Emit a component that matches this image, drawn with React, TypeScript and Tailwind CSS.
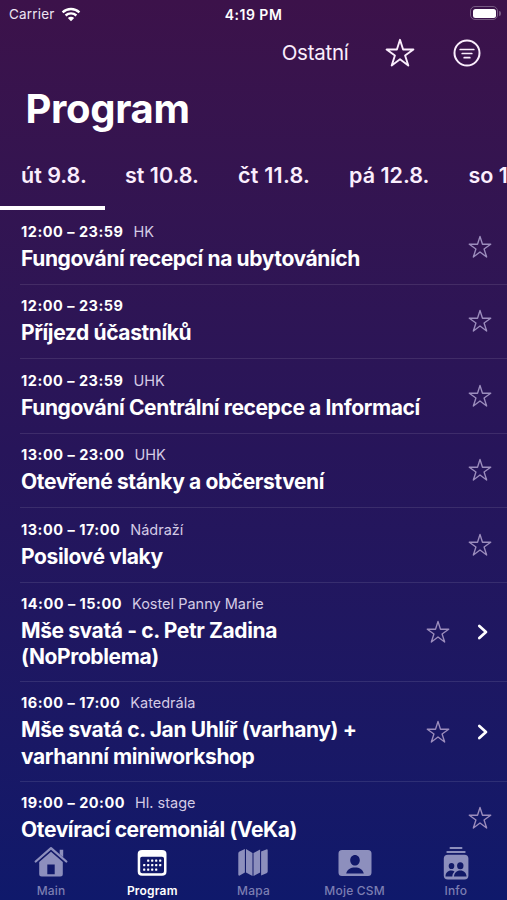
import React from "react";

type Item = { time: string; place?: string; lines: string[]; more?: boolean };

const days = [
  { label: "út 9.8.", cls: "w-[104px]" },
  { label: "st 10.8.", cls: "w-[113px]" },
  { label: "čt 11.8.", cls: "w-[111px] tracking-[0.25px]" },
  { label: "pá 12.8.", cls: "w-[119.5px]" },
  { label: "so 13.8.", cls: "w-[113px]" },
];

const items: Item[] = [
  { time: "12:00 – 23:59", place: "HK", lines: ["Fungování recepcí na ubytováních"] },
  { time: "12:00 – 23:59", lines: ["Příjezd účastníků"] },
  { time: "12:00 – 23:59", place: "UHK", lines: ["Fungování Centrální recepce a Informací"] },
  { time: "13:00 – 23:00", place: "UHK", lines: ["Otevřené stánky a občerstvení"] },
  { time: "13:00 – 17:00", place: "Nádraží", lines: ["Posilové vlaky"] },
  { time: "14:00 – 15:00", place: "Kostel Panny Marie", lines: ["Mše svatá - c. Petr Zadina", "(NoProblema)"], more: true },
  { time: "16:00 – 17:00", place: "Katedrála", lines: ["Mše svatá c. Jan Uhlíř (varhany) +", "varhanní miniworkshop"], more: true },
  { time: "19:00 – 20:00", place: "Hl. stage", lines: ["Otevírací ceremoniál (VeKa)"] },
];

function Star({ className, weight }: { className: string; weight: number }) {
  return (
    <svg viewBox="0 0 30 30" className={className} fill="none" stroke="currentColor" strokeWidth={weight} strokeLinejoin="round">
      <path d="M15 1.8 18.1 11.5H28.4L20.1 17.5 23.3 27.5 15 21.3 6.7 27.5 9.9 17.5 1.6 11.5H11.9Z" />
    </svg>
  );
}

function Wifi() {
  return (
    <svg viewBox="0 0 20 15" className="h-[15px] w-5" fill="none" stroke="white" strokeWidth="2.4">
      <path d="M1.6 5.4C6.4.9 13.6.9 18.4 5.4M4.6 8.5C7.7 5.7 12.3 5.7 15.4 8.5" />
      <path d="M10 14.2 6.8 11C8.6 9.4 11.4 9.4 13.2 11Z" fill="white" stroke="none" />
    </svg>
  );
}

function HomeIcon() {
  return (
    <svg viewBox="0 0 34 32" className="h-8 w-[34px]" fill="currentColor">
      <path d="M1.7 15.5 17 2.2 32.3 15.5" fill="none" stroke="currentColor" strokeWidth="2.3" strokeLinecap="round" strokeLinejoin="round" />
      <path d="M25.7 3.8H29.2V11.2L25.7 8.2Z" />
      <path fillRule="evenodd" d="M17 5.8 5.2 16V28Q5.2 30.5 7.7 30.5H26.3Q28.8 30.5 28.8 28V16ZM13.3 18.5H20.7V28.3H13.3Z" />
    </svg>
  );
}

function CalendarIcon() {
  const dots = [[13, 14.5], [17, 14.5], [21, 14.5], [25, 14.5], [9, 19], [13, 19], [17, 19], [21, 19], [25, 19], [9, 23.5], [13, 23.5], [17, 23.5], [21, 23.5]];
  return (
    <svg viewBox="0 0 34 32" className="h-8 w-[34px]" fill="currentColor">
      <path fillRule="evenodd" d="M7 4H27Q31.5 4 31.5 8V25.5Q31.5 29.8 27 29.8H7Q2.7 29.8 2.7 25.5V8Q2.7 4 7 4ZM7 10.8Q5.2 10.8 5.2 12.5V25.3Q5.2 27.3 7.2 27.3H26.8Q29 27.3 29 25.3V12.5Q29 10.8 27 10.8Z" />
      {dots.map(([x, y]) => <rect key={`${x}-${y}`} x={x - 0.9} y={y - 1} width="2.2" height="2.2" rx="0.4" />)}
    </svg>
  );
}

function MapIcon() {
  return (
    <svg viewBox="0 0 34 32" className="h-8 w-[34px]" fill="currentColor">
      <path d="M2.3 7.5Q2.3 6.2 3.5 5.6L8.9 3.1V26.5L3.7 29.5Q2.3 30 2.3 28.5ZM10 3.1 16.5 7V30L10 26.5ZM17.5 7 24.1 3.5V26.5L17.5 30ZM25.1 5.5 30.3 3.4Q31.7 3 31.7 4.5V25.5Q31.7 26.5 30.5 27.2L25.1 29.5Z" />
    </svg>
  );
}

function PersonIcon() {
  return (
    <svg viewBox="0 0 34 32" className="h-8 w-[34px]" fill="currentColor">
      <path fillRule="evenodd" d="M4 4H30Q33.5 4 33.5 7.5V26.5Q33.5 30 30 30H4Q.5 30 .5 26.5V7.5Q.5 4 4 4ZM17 9C14.2 9 12.2 11.3 12.2 14.2S14.3 19.5 17 19.5 21.8 17.1 21.8 14.2 19.8 9 17 9ZM8.2 27.4H25.8C24.7 23.5 21.5 21.6 17 21.6S9.3 23.5 8.2 27.4Z" />
    </svg>
  );
}

function InfoIcon() {
  return (
    <svg viewBox="0 0 34 36" className="h-9 w-[34px]">
      <g fill="currentColor">
        <rect x="10.5" y="1" width="13" height="1.9" rx=".9" />
        <rect x="7.3" y="4.9" width="19.4" height="2.1" rx="1" />
        <rect x="4.8" y="8.8" width="24.6" height="24.7" rx="4" />
      </g>
      <g fill="#111967">
        <ellipse cx="12.5" cy="20" rx="2.8" ry="3.1" />
        <ellipse cx="21.3" cy="19.7" rx="3.2" ry="3.5" />
        <path d="M6.5 30.5C6.5 27 8.8 24.5 12.2 24.5Q14.2 24.5 15.5 25.6Q13.3 27.8 13.3 30.5ZM15 30.5C15.3 27 17.5 24.6 21.3 24.6S27.3 27 27.6 30.5Z" />
      </g>
    </svg>
  );
}

const tabs = [
  { label: "Main", icon: <HomeIcon /> },
  { label: "Program", icon: <CalendarIcon />, active: true },
  { label: "Mapa", icon: <MapIcon /> },
  { label: "Moje CSM", icon: <PersonIcon /> },
  { label: "Info", icon: <InfoIcon /> },
];

export default function App() {
  return (
    <div className="flex h-[900px] w-[507px] flex-col overflow-hidden bg-linear-to-b from-[#3c124a] via-[#27155a] via-50% to-[#0f196b] font-['Inter','Liberation_Sans',sans-serif] text-white">
      <header className="grid h-7 shrink-0 grid-cols-3 items-center px-[9px] text-[13.5px]">
        <div className="flex items-center gap-[6px]"><span className="tracking-[0.2px] text-[#eee4f2]">Carrier</span><Wifi /></div>
        <div className="text-center text-[14px] font-semibold tracking-[0.5px]">4:19 PM</div>
        <div className="-mr-[3px] flex items-center justify-end gap-px pb-[2px]">
          <div className="h-[14px] w-7 rounded-[5px] border-[1.5px] border-[#765a82] p-[1.5px]"><div className="h-full rounded-[2.5px] bg-white" /></div>
          <div className="h-[5px] w-[2px] rounded-r-full bg-[#765a82]" />
        </div>
      </header>
      <div className="flex h-[50px] shrink-0 items-center justify-end pr-[26px]">
        <span className="mr-[36.5px] text-[20.5px] tracking-[-0.25px] text-[#fbeefd]">Ostatní</span>
        <Star className="mr-[38px] h-[30px] w-[30px] text-[#fbeefd]" weight={1.9} />
        <svg viewBox="0 0 28 28" className="h-7 w-7" fill="none" stroke="#fbeefd" strokeWidth="2" strokeLinecap="round">
          <circle cx="14" cy="14" r="12.5" /><path d="M7.2 10.5H20.8M9.2 14.5H18.8M11.2 18.7H16.8" strokeWidth="1.7" />
        </svg>
      </div>
      <h1 className="h-[62px] shrink-0 pl-[25.5px] text-[40px] leading-[62px] font-bold tracking-[-0.35px]">Program</h1>
      <nav className="flex h-[70px] shrink-0 overflow-x-clip pl-[21px] text-[21.5px] leading-[70px] font-semibold whitespace-nowrap text-[#fbeefd]">
        {days.map((d) => <div key={d.label} className={`${d.cls} shrink-0`}>{d.label}</div>)}
      </nav>
      <div className="-mt-1 h-1 w-[105px] shrink-0 bg-white" />
      <main className="h-[634px] shrink-0 overflow-hidden">
        {items.map((it, i) => (
          <div key={i} className={`ml-5 flex border-b-[1.5px] border-white/10 pl-px ${it.more ? "h-[99.7px] pt-[12px]" : "h-[74.5px] pt-[12.5px]"}`}>
            <div className="min-w-0 flex-1 whitespace-nowrap">
              <div className="flex h-[22px] gap-[10px] text-[14.5px] leading-[18px]">
                <span className="font-[650] tracking-[0.5px]">{it.time}</span>
                {it.place && <span className="text-[#d4cbe5]">{it.place}</span>}
              </div>
              {it.lines.map((l) => <div key={l} className="h-[26.5px] text-[21px] leading-[27px] font-[650] tracking-[-0.39px]">{l}</div>)}
            </div>
            <div className={`flex h-[48px] shrink-0 items-center text-[#9c8dbd] ${it.more ? "pt-[27px] pr-[18px]" : "pr-[15px]"}`}>
              <Star className="h-6 w-6" weight={1.7} />
              {it.more && (
                <svg viewBox="0 0 12 18" className="ml-[27px] h-[18px] w-3" fill="none" stroke="white" strokeWidth="2.7" strokeLinecap="round" strokeLinejoin="round"><path d="M2.3 3 9 9 2.3 15" /></svg>
              )}
            </div>
          </div>
        ))}
      </main>
      <footer className="-mt-1 flex h-[60px] shrink-0">
        {tabs.map((t) => (
          <div key={t.label} className={`flex w-[101.2px] flex-col items-center pl-px tracking-[0.2px] ${t.active ? "font-semibold text-white" : "font-medium text-[#7c7eb2]"}`}>
            <div className={`flex h-[43px] items-start pt-[6px] ${t.active ? "" : "text-[#8d8fbd]"}`}>{t.icon}</div>
            <span className="text-[12px] leading-4">{t.label}</span>
          </div>
        ))}
      </footer>
    </div>
  );
}
